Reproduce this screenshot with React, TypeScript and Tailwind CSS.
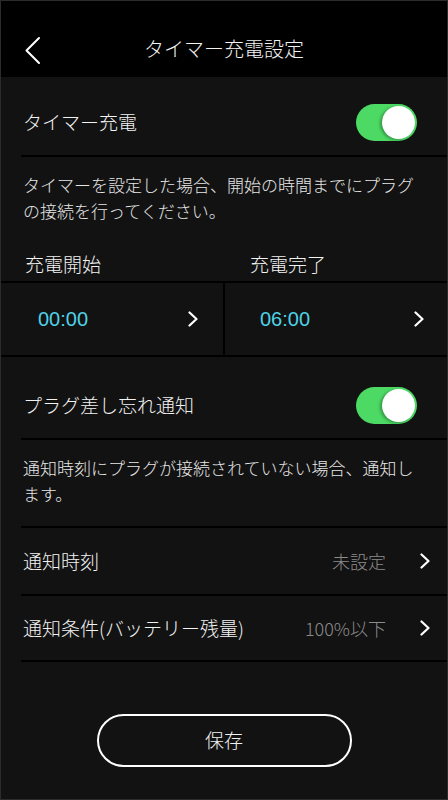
const font = { fontFamily: '"Noto Sans CJK JP", "Noto Sans", sans-serif' };
const numFont = { fontFamily: '"Liberation Sans", "Noto Sans", sans-serif' };

function Chevron() {
	return (
		<svg width="10" height="16" viewBox="0 0 10 16" fill="none" className="shrink-0">
			<polyline points="1.5,1.5 8.5,8 1.5,14.5" stroke="white" strokeWidth="2.2" strokeLinecap="round" strokeLinejoin="round" />
		</svg>
	);
}

function Toggle() {
	return (
		<div className="relative h-[37px] w-[61px] rounded-full bg-[#4cd964]">
			<div className="absolute right-[2px] top-[2px] size-[33px] rounded-full bg-white shadow-[-2px_1px_3px_rgba(0,0,0,0.3)]" />
		</div>
	);
}

function Divider({ inset = true }: { inset?: boolean }) {
	return <div className={inset ? 'ml-[20px] h-[2px] bg-black' : 'h-[2px] bg-black'} />;
}

function NavRow({ label, value, height }: { label: string; value: string; height: string }) {
	return (
		<div className={`flex items-center pl-[22px] pr-[17px] ${height}`}>
			<span className="flex-1 text-[19px] font-light text-[#f2f2f2]">{label}</span>
			<span className="text-[18px] font-light text-[#8c8c8c]">{value}</span>
			<div className="ml-[34px]">
				<Chevron />
			</div>
		</div>
	);
}

export default function App() {
	return (
		<div className="flex h-[800px] w-[448px] flex-col border border-[#2c2c2c] bg-[#121212]" style={font}>
			<div className="relative flex h-[76px] items-center justify-center bg-black pt-[20px]">
				<svg width="18" height="30" viewBox="0 0 18 30" fill="none" className="absolute left-[23px] top-[35px]">
					<polyline points="15,2 2.5,14.5 15,27" stroke="white" strokeWidth="2" strokeLinecap="round" strokeLinejoin="round" />
				</svg>
				<span className="text-[20px] font-light text-[#f2f2f2]">タイマー充電設定</span>
			</div>

			<div className="flex h-[78px] items-center justify-between pl-[22px] pr-[30px] pt-[12px]">
				<span className="text-[19px] font-light text-[#f2f2f2]">タイマー充電</span>
				<Toggle />
			</div>
			<Divider />

			<p className="px-[22px] pt-[15px] text-[17px] font-light leading-[26px] text-[#e6e6e6]">
				タイマーを設定した場合、開始の時間までにプラグの接続を行ってください。
			</p>

			<div className="flex h-[57px] items-center pt-[24px]">
				<span className="w-[225px] pl-[24px] text-[19px] font-light text-[#f2f2f2]">充電開始</span>
				<span className="pl-[24px] text-[19px] font-light text-[#f2f2f2]">充電完了</span>
			</div>
			<Divider inset={false} />
			<div className="flex h-[72px]">
				<div className="flex w-[224px] items-center justify-between border-r-2 border-black pl-[37px] pr-[25px]">
					<span className="text-[20px] text-[#4fd1e6]" style={numFont}>00:00</span>
					<Chevron />
				</div>
				<div className="flex flex-1 items-center justify-between pl-[35px] pr-[23px]">
					<span className="text-[20px] text-[#4fd1e6]" style={numFont}>06:00</span>
					<Chevron />
				</div>
			</div>
			<Divider inset={false} />

			<div className="flex h-[81px] items-center justify-between pl-[22px] pr-[30px] pt-[15px]">
				<span className="text-[19px] font-light text-[#f2f2f2]">プラグ差し忘れ通知</span>
				<Toggle />
			</div>
			<Divider />

			<p className="px-[22px] pt-[15px] text-[17px] font-light leading-[26px] text-[#e6e6e6]">
				通知時刻にプラグが接続されていない場合、通知します。
			</p>
			<div className="mt-[19px]">
				<Divider />
			</div>
			<NavRow label="通知時刻" value="未設定" height="h-[66px]" />
			<Divider />
			<NavRow label="通知条件(バッテリー残量)" value="100%以下" height="h-[64px]" />
			<Divider />

			<div className="flex flex-1 items-start justify-center pt-[52px]">
				<button className="flex h-[53px] w-[255px] items-center justify-center rounded-full border-2 border-white text-[19px] font-light text-[#f2f2f2]">
					保存
				</button>
			</div>
		</div>
	);
}
